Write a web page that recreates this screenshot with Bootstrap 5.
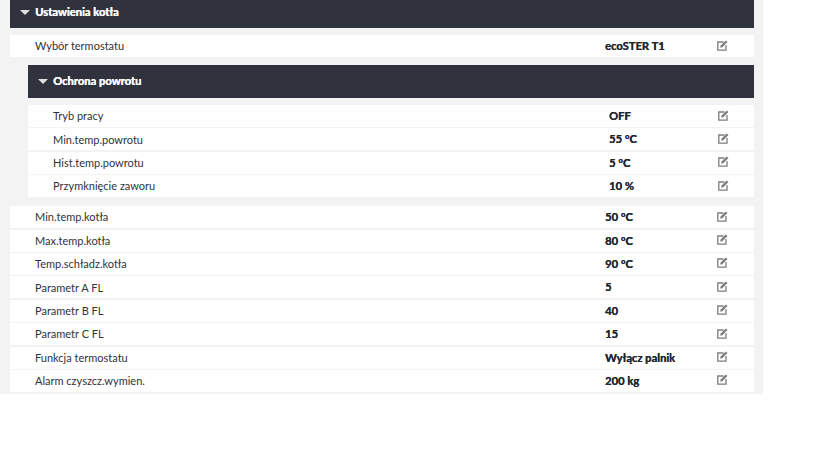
<!DOCTYPE html>
<html lang="pl"><head><meta charset="utf-8"><title>Ustawienia kotła</title>
<link href="https://cdn.jsdelivr.net/npm/bootstrap@5.3.0/dist/css/bootstrap.min.css" rel="stylesheet">
<style>
body{background:#fff;font-family:Lato,"Noto Sans",sans-serif;font-size:11px;color:#2f323c;overflow:hidden}
.panel-wrap{width:763px;background:#f3f3f3;padding:0 9px 2px 10px}
.head-bar{background:#30333d;color:#fff;font-weight:700;height:28px;padding-left:10px;gap:5px;font-size:11.2px;text-shadow:.4px 0 0 #fff}
.head-bar.inner-top{padding-bottom:4px}
.head-bar.inner{height:33px}
.tri{width:0;height:0;border-left:5px solid transparent;border-right:5px solid transparent;border-top:5px solid #e0e0e0}
.set-list{margin-top:7px;display:flex;flex-direction:column;gap:1.4px}
.set-row{background:#fff;height:22px;padding-left:25px;padding-top:1px}
.set-name{width:570px}
.set-val{width:112px;font-weight:700;font-size:11.2px;color:#23262e;text-shadow:.3px 0 0 #23262e}
.set-list.sub{padding-bottom:9px;margin-top:7px}
.sub-wrap{margin:8px 0 0 18px}
.sub-wrap .set-name{width:556px}
.sub-wrap .set-val{width:109px}
.pen{width:11px;height:11px;display:block;margin-top:-3px}
</style></head><body>
<div class="panel-wrap">
<div class="head-bar inner-top d-flex align-items-center"><span class="tri"></span><span>Ustawienia kotła</span></div>
<div class="set-list">
<div class="set-row d-flex align-items-center"><span class="set-name">Wybór termostatu</span><span class="set-val">ecoSTER T1</span><svg class="pen" viewBox="0 0 11 11"><use href="#pn"/></svg></div>
</div>
<div class="sub-wrap">
<div class="head-bar inner d-flex align-items-center"><span class="tri"></span><span>Ochrona powrotu</span></div>
<div class="set-list sub">
<div class="set-row d-flex align-items-center"><span class="set-name">Tryb pracy</span><span class="set-val">OFF</span><svg class="pen" viewBox="0 0 11 11"><use href="#pn"/></svg></div>
<div class="set-row d-flex align-items-center"><span class="set-name">Min.temp.powrotu</span><span class="set-val">55 °C</span><svg class="pen" viewBox="0 0 11 11"><use href="#pn"/></svg></div>
<div class="set-row d-flex align-items-center"><span class="set-name">Hist.temp.powrotu</span><span class="set-val">5 °C</span><svg class="pen" viewBox="0 0 11 11"><use href="#pn"/></svg></div>
<div class="set-row d-flex align-items-center"><span class="set-name">Przymknięcie zaworu</span><span class="set-val">10 %</span><svg class="pen" viewBox="0 0 11 11"><use href="#pn"/></svg></div>
</div>
</div>
<div class="set-list mt-0">
<div class="set-row d-flex align-items-center"><span class="set-name">Min.temp.kotła</span><span class="set-val">50 °C</span><svg class="pen" viewBox="0 0 11 11"><use href="#pn"/></svg></div>
<div class="set-row d-flex align-items-center"><span class="set-name">Max.temp.kotła</span><span class="set-val">80 °C</span><svg class="pen" viewBox="0 0 11 11"><use href="#pn"/></svg></div>
<div class="set-row d-flex align-items-center"><span class="set-name">Temp.schładz.kotła</span><span class="set-val">90 °C</span><svg class="pen" viewBox="0 0 11 11"><use href="#pn"/></svg></div>
<div class="set-row d-flex align-items-center"><span class="set-name">Parametr A FL</span><span class="set-val">5</span><svg class="pen" viewBox="0 0 11 11"><use href="#pn"/></svg></div>
<div class="set-row d-flex align-items-center"><span class="set-name">Parametr B FL</span><span class="set-val">40</span><svg class="pen" viewBox="0 0 11 11"><use href="#pn"/></svg></div>
<div class="set-row d-flex align-items-center"><span class="set-name">Parametr C FL</span><span class="set-val">15</span><svg class="pen" viewBox="0 0 11 11"><use href="#pn"/></svg></div>
<div class="set-row d-flex align-items-center"><span class="set-name">Funkcja termostatu</span><span class="set-val">Wyłącz palnik</span><svg class="pen" viewBox="0 0 11 11"><use href="#pn"/></svg></div>
<div class="set-row d-flex align-items-center"><span class="set-name">Alarm czyszcz.wymien.</span><span class="set-val">200 kg</span><svg class="pen" viewBox="0 0 11 11"><use href="#pn"/></svg></div>
</div>
</div>
<svg width="0" height="0" class="d-block"><defs><g id="pn"><path d="M6.5 2H.8v8.2H9V5" fill="none" stroke="#7d7d7d" stroke-width="1.3"/><path d="M3.6 5.6 8.8 .4l1.7 1.7L5.3 7.3 3.2 7.8z" fill="#7d7d7d"/></g></defs></svg>
</body></html>
